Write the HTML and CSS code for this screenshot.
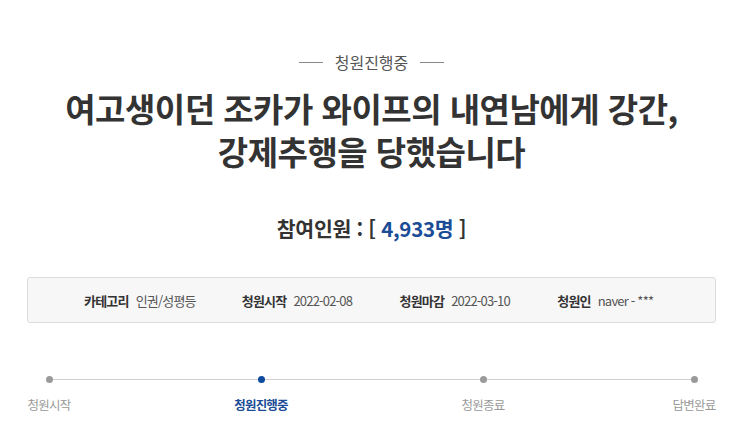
FILE: index.html
```html
<!DOCTYPE html>
<html lang="ko">
<head>
<meta charset="utf-8">
<link rel="stylesheet" href="styles.css">
</head>
<body>
<div class="page">
  <div class="status"><span class="dash"></span><span class="status-text">청원진행중</span><span class="dash"></span></div>
  <h1 class="title">여고생이던 조카가 와이프의 내연남에게 강간,<br>강제추행을 당했습니다</h1>
  <p class="count">참여인원 : [ <span class="num">4,933명</span> ]</p>
  <ul class="info">
    <li><strong>카테고리</strong><span>인권/성평등</span></li>
    <li><strong>청원시작</strong><span>2022-02-08</span></li>
    <li><strong>청원마감</strong><span>2022-03-10</span></li>
    <li><strong>청원인</strong><span>naver - ***</span></li>
  </ul>
  <ol class="steps">
    <li class="step s1"><i class="dot"></i><span>청원시작</span></li>
    <li class="step s2 active"><i class="dot"></i><span>청원진행중</span></li>
    <li class="step s3"><i class="dot"></i><span>청원종료</span></li>
    <li class="step s4"><i class="dot"></i><span>답변완료</span></li>
  </ol>
</div>
</body>
</html>
```
FILE: styles.css
```css
* { box-sizing: border-box; }
html, body { margin: 0; padding: 0; background: #fff; }
body { font-family: "Noto Sans CJK KR", "Noto Sans", sans-serif; color: #333; }
.page { padding: 51px 27px 0 27px; width: 743px; }
.status { display: flex; justify-content: center; align-items: center; gap: 12px; height: 22px; }
.dash { width: 24px; height: 1px; background: #8a8a8a; }
.status-text { font-size: 16px; color: #555; letter-spacing: 0; }
.title { margin: 14px 0 0; text-align: center; font-size: 33px; line-height: 43px; font-weight: 700; color: #333; letter-spacing: -0.5px; }
.count { margin: 41px 0 0; text-align: center; font-size: 20.5px; font-weight: 700; line-height: 28px; color: #333; letter-spacing: -0.3px; }
.count .num { color: #1b4c96; }
.info { list-style: none; margin: 35px 0 0; padding: 0 0 0 56px; height: 46px; background: #f7f7f7; border: 1px solid #dcdcdc; border-radius: 3px; display: flex; align-items: center; gap: 0; }
.info li { display: flex; gap: 7px; font-size: 13px; letter-spacing: -0.8px; width: 159px; }
.info li strong { font-weight: 700; color: #333; }
.info li span { color: #555; }
.steps { list-style: none; margin: 53px 0 0; padding: 0; display: flex; position: relative; }
.steps::before { content: ""; position: absolute; left: 21px; right: 22px; top: 3px; height: 1px; background: #cfcfcf; }
.step { width: 44px; display: flex; flex-direction: column; align-items: center; gap: 14px; position: relative; }
.s2 { margin-left: 168px; }
.s3 { margin-left: 178px; }
.s4 { margin-left: auto; }
.dot { display: block; width: 7px; height: 7px; border-radius: 50%; background: #9a9a9a; }
.step span { font-size: 12.5px; color: #999; white-space: nowrap; letter-spacing: -0.8px; line-height: 16px; }
.step.active .dot { background: #0e4a9e; }
.step.active span { color: #1b4c96; font-weight: 700; }
```
